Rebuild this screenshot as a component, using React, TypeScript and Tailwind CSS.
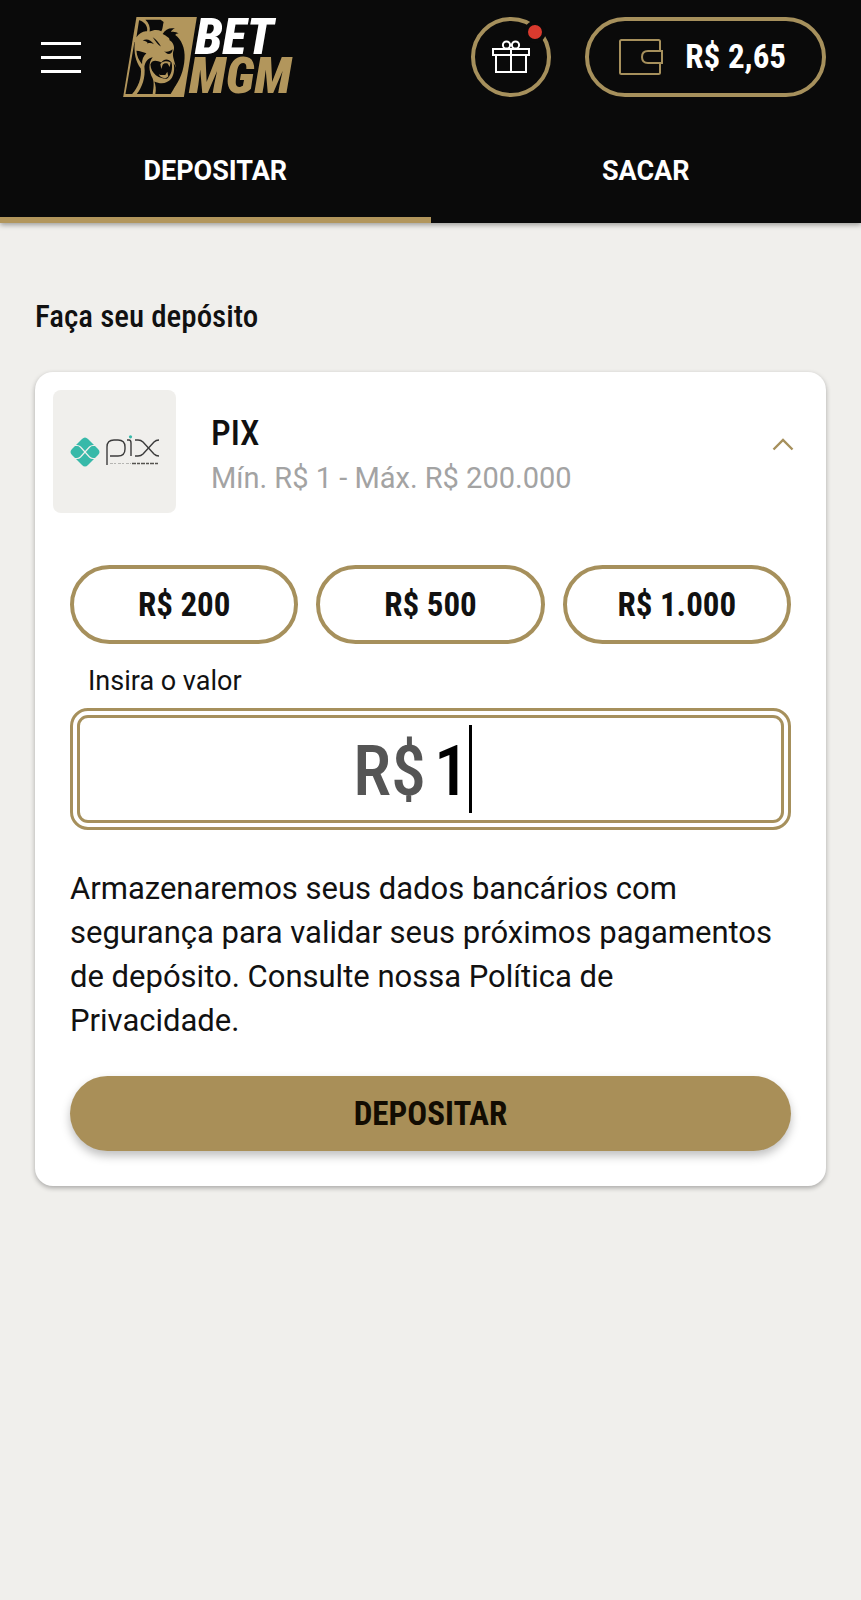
import React, { useState } from 'react';

const quickAmounts = [
  { value: '200', label: 'R$ 200' },
  { value: '500', label: 'R$ 500' },
  { value: '1000', label: 'R$ 1.000' },
];

const tabs = [
  { id: 'deposit', label: 'DEPOSITAR' },
  { id: 'withdraw', label: 'SACAR' },
];

// ===== Logo =====
function BrandLogo() {
  return (
    <span className="flex">
      <svg viewBox="9 9 222 241" className="h-20 w-[74px]" aria-hidden="true">
        <path d="M49 9H231L192 250H9Z" fill="#b2965c" />
        <g fill="#0a0a0a">
          {/* ear and top of the mane */}
          <path d="M57 19C72 22 85 38 81 52C69 50 58 58 49 70Z" />
          <path d="M76 17H122L131 24C128 34 129 44 124 52C113 46 101 47 89 53C91 38 86 26 76 17Z" />
          {/* right side of the mane */}
          <path d="M128 60C136 46 150 40 165 44C158 46 155 50 153 54C161 52 170 54 176 59C171 59 168 60 166 63C184 76 196 102 194 134C192 170 180 200 160 226C169 204 172 184 168 162C164 140 156 128 160 112C166 100 160 84 148 78C152 74 140 66 128 60Z" />
          {/* brow, eye and nose */}
          <path d="M68 80C80 73 92 78 102 91C94 87 88 87 82 89C84 85 78 82 68 80Z" />
          <path d="M98 70C108 76 117 86 123 98C115 94 108 84 98 70Z" />
          <path d="M132 112C142 116 150 112 158 106C158 116 152 122 142 120Z" />
          {/* cheek and neck */}
          <path d="M49 111C59 111 70 116 79 118C70 126 65 137 66 151C57 141 50 128 49 111Z" />
          <path d="M44 84C41 116 46 142 62 164C66 190 54 222 36 241H16L43 84Z" />
          <path d="M73 158C75 145 82 133 98 130C84 146 86 172 98 194C104 210 99 228 98 241H50C66 222 77 190 73 158Z" />
          {/* mouth */}
          <path d="M91 152C96 137 110 139 124 146C132 134 146 134 155 146C159 166 153 185 141 195C119 196 93 181 91 152Z" />
          <path d="M103 203C121 212 142 210 153 196C161 184 165 168 161 148C176 166 178 204 152 241H106C109 228 107 214 103 203Z" />
        </g>
        <g fill="#b2965c">
          <path d="M121 151C128 141 140 140 152 146L149 160L143 149C136 147 130 149 128 153L124 166Z" />
          <path d="M116 180L120 184H136L142 174L145 188L138 193C128 194 119 190 116 180Z" />
        </g>
      </svg>
      <span className='-ml-2 flex flex-col pt-px font-["Roboto_Condensed",sans-serif] text-[50px] leading-[39px] font-black italic'>
        <span className="pl-[6px] text-white">BET</span>
        <span className="text-[#b2965c]">MGM</span>
      </span>
    </span>
  );
}

function GiftIcon() {
  return (
    <svg viewBox="0 0 38 34" className="h-[34px] w-[38px]" fill="none" stroke="#ffffff" strokeWidth="2" aria-hidden="true">
      <path d="M1 9H37V15H1Z" />
      <path d="M4 15V32H34V15M19 9V32" />
      <circle cx="14.5" cy="5" r="3.6" />
      <circle cx="23.5" cy="5" r="3.6" />
    </svg>
  );
}

function WalletIcon() {
  return (
    <svg viewBox="0 0 44 36" className="h-9 w-11" fill="none" stroke="#a6905c" strokeWidth="2" aria-hidden="true">
      <path d="M41 12V2.500Q41 1 39.500 1H2.500Q1 1 1 2.500V33.500Q1 35 2.500 35H39.500Q41 35 41 33.500V24" />
      <path d="M43 12H29Q23 12 23 18T29 24H43Z" />
    </svg>
  );
}

function PixLogo() {
  return (
    <svg viewBox="0 0 90 34" className="h-[34px] w-[90px]" role="img" aria-label="Pix">
      <path d="M2 14L12 4Q15 1 18 4L28 14Q31 17 28 20L18 30Q15 33 12 30L2 20Q-1 17 2 14Z" fill="#37b9a9" />
      <g fill="none" stroke="#f0efec" strokeWidth="1.2">
        <path d="M3 10.500H7Q9 10.500 10.500 12L19.500 22Q21 23.500 23 23.500H27" />
        <path d="M27 10.500H23Q21 10.500 19.500 12L10.500 22Q9 23.500 7 23.500H3" />
      </g>
      <g fill="none" stroke="#3c3c3c" strokeWidth="1.4">
        <path d="M37 30V12Q37 5 44 5H48Q55 5 55 12V14Q55 21 48 21H40" />
        <path d="M57 5H59Q61 5 61 8V21" />
        <path d="M65 5H68Q71 5 73 7L84 19Q86 21 89 21" />
        <path d="M65 21H68Q71 21 73 19L84 7Q86 5 89 5" />
      </g>
      <circle cx="60.500" cy="1.800" r="1.600" fill="#37b9a9" />
      <path d="M40 28.500H61" stroke="#b5b5b2" strokeWidth="1" strokeDasharray="3 1 2 2" />
      <path d="M62 28.500H89" stroke="#55534f" strokeWidth="1.600" strokeDasharray="4 1 3 1" />
    </svg>
  );
}

// ===== Header =====
function Header({ activeTab, onTab }: { activeTab: string; onTab: (id: string) => void }) {
  return (
    <header className="bg-[#0a0a0a] text-white shadow-[0_2px_5px_rgba(0,0,0,0.35)]">
      <div className="flex items-center pt-[17px] pr-[35px] pl-[41px]">
        <button type="button" aria-label="Menu" className="flex w-10 flex-col gap-[11px]">
          <span className="h-[3px] bg-white" />
          <span className="h-[3px] bg-white" />
          <span className="h-[3px] bg-white" />
        </button>
        <a href="#" aria-label="BetMGM" className="ml-[42px]">
          <BrandLogo />
        </a>
        <button
          type="button"
          aria-label="Bônus"
          className="relative ml-auto flex size-20 items-center justify-center rounded-full border-4 border-[#a6905c]"
        >
          <GiftIcon />
          <span className="absolute top-0 right-px size-[22px] rounded-full border-4 border-[#0a0a0a] bg-[#d93a2e]" />
        </button>
        <button
          type="button"
          className="ml-[34px] flex h-20 items-center gap-[22px] rounded-full border-4 border-[#a6905c] pr-9 pl-[30px]"
        >
          <WalletIcon />
          <span className='font-["Roboto_Condensed",sans-serif] text-[33px] font-bold'>R$ 2,65</span>
        </button>
      </div>
      <nav className="mt-5 grid grid-cols-2">
        {tabs.map((tab) => (
          <button
            key={tab.id}
            type="button"
            onClick={() => onTab(tab.id)}
            className={`h-[106px] border-b-6 pt-2 text-[27px] font-bold ${
              activeTab === tab.id ? 'border-[#b2965c]' : 'border-transparent'
            }`}
          >
            {tab.label}
          </button>
        ))}
      </nav>
    </header>
  );
}

// ===== Pix deposit card =====
function PixCard() {
  const [amount, setAmount] = useState('1');

  return (
    <section className="rounded-[18px] bg-white px-[18px] pt-[18px] pb-[35px] shadow-[0_2px_5px_rgba(0,0,0,0.3)]">
      <div className="flex">
        <div className="flex size-[123px] items-center justify-center rounded-lg bg-[#f0efec]">
          <PixLogo />
        </div>
        <div className="ml-[35px] pt-[22px]">
          <h2 className='font-["Roboto_Condensed",sans-serif] text-[35px] leading-[44px] font-medium'>PIX</h2>
          <p className="text-[29px] leading-[44px] text-[#a3a3a3]">Mín. R$ 1 - Máx. R$ 200.000</p>
        </div>
        <button
          type="button"
          aria-label="Recolher"
          className="mt-11 mr-[13px] ml-auto flex size-6 items-center justify-center self-start"
        >
          <svg viewBox="0 0 24 24" className="size-6" fill="none" stroke="#a6905c" strokeWidth="2.400">
            <path d="M2.500 15.500L12 6L21.500 15.500" />
          </svg>
        </button>
      </div>

      <div className="mt-[52px] px-[17px]">
        <div className="grid grid-cols-3 gap-[18px]">
          {quickAmounts.map((item) => (
            <button
              key={item.value}
              type="button"
              onClick={() => setAmount(item.value)}
              className='h-[79px] rounded-full border-4 border-[#a6905c] font-["Roboto_Condensed",sans-serif] text-[33px] font-bold'
            >
              {item.label}
            </button>
          ))}
        </div>

        <label htmlFor="amount" className="mt-4 ml-[18px] block text-[27px] leading-[42px]">
          Insira o valor
        </label>
        <div className='mt-[6px] flex h-[122px] items-center justify-center rounded-[18px] border-10 border-double border-[#a6905c] pr-9 font-["Roboto_Condensed",sans-serif] text-[70px] font-medium'>
          <span className="pt-1 text-[#555555]">R$</span>
          <input
            id="amount"
            type="text"
            inputMode="numeric"
            value={amount}
            onChange={(e) => setAmount(e.target.value)}
            className="ml-2 field-sizing-content bg-transparent pt-1 text-black caret-transparent outline-none"
          />
          <span className="h-[88px] w-[3px] bg-black" />
        </div>

        <p className="mt-[37px] pr-2 text-[31px] leading-[44px]">
          Armazenaremos seus dados bancários com segurança para validar seus próximos pagamentos de depósito. Consulte
          nossa Política de Privacidade.
        </p>

        <button
          type="button"
          className='mt-[33px] h-[75px] w-full rounded-full bg-[#a98f58] font-["Roboto_Condensed",sans-serif] text-[33px] font-bold text-[#120c02] shadow-[0_5px_10px_rgba(0,0,0,0.25)]'
        >
          DEPOSITAR
        </button>
      </div>
    </section>
  );
}

export default function App() {
  const [activeTab, setActiveTab] = useState('deposit');

  return (
    <div className='min-h-screen bg-[#f0efec] font-["Roboto",sans-serif] text-[#111111]'>
      <Header activeTab={activeTab} onTab={setActiveTab} />
      <main className="px-[35px] pt-[72px] pb-16">
        <h1 className='font-["Roboto_Condensed",sans-serif] text-[31px] leading-[44px] font-medium'>Faça seu depósito</h1>
        <div className="mt-[33px]">
          <PixCard />
        </div>
      </main>
    </div>
  );
}
